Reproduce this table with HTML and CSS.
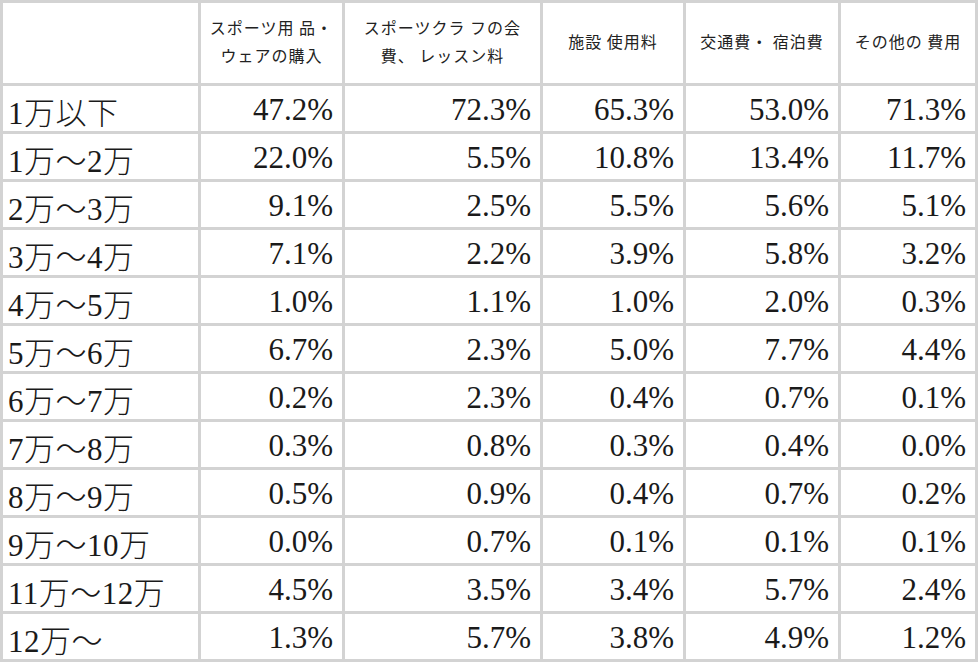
FILE: index.html
```html
<!DOCTYPE html>
<html lang="ja">
<head>
<meta charset="utf-8">
<title>スポーツ費用</title>
<link rel="stylesheet" href="styles.css">
</head>
<body>
<div class="grid">
  <div class="hd"></div>
  <div class="hd">スポーツ用 品・<br>ウェアの購入</div>
  <div class="hd">スポーツクラ フの会<br>費、 レッスン料</div>
  <div class="hd">施設 使用料</div>
  <div class="hd">交通費・ 宿泊費</div>
  <div class="hd">その他の 費用</div>

  <div class="lb">1万以下</div><div class="num">47.2%</div><div class="num">72.3%</div><div class="num">65.3%</div><div class="num">53.0%</div><div class="num">71.3%</div>
  <div class="lb">1万〜2万</div><div class="num">22.0%</div><div class="num">5.5%</div><div class="num">10.8%</div><div class="num">13.4%</div><div class="num">11.7%</div>
  <div class="lb">2万〜3万</div><div class="num">9.1%</div><div class="num">2.5%</div><div class="num">5.5%</div><div class="num">5.6%</div><div class="num">5.1%</div>
  <div class="lb">3万〜4万</div><div class="num">7.1%</div><div class="num">2.2%</div><div class="num">3.9%</div><div class="num">5.8%</div><div class="num">3.2%</div>
  <div class="lb">4万〜5万</div><div class="num">1.0%</div><div class="num">1.1%</div><div class="num">1.0%</div><div class="num">2.0%</div><div class="num">0.3%</div>
  <div class="lb">5万〜6万</div><div class="num">6.7%</div><div class="num">2.3%</div><div class="num">5.0%</div><div class="num">7.7%</div><div class="num">4.4%</div>
  <div class="lb">6万〜7万</div><div class="num">0.2%</div><div class="num">2.3%</div><div class="num">0.4%</div><div class="num">0.7%</div><div class="num">0.1%</div>
  <div class="lb">7万〜8万</div><div class="num">0.3%</div><div class="num">0.8%</div><div class="num">0.3%</div><div class="num">0.4%</div><div class="num">0.0%</div>
  <div class="lb">8万〜9万</div><div class="num">0.5%</div><div class="num">0.9%</div><div class="num">0.4%</div><div class="num">0.7%</div><div class="num">0.2%</div>
  <div class="lb">9万〜10万</div><div class="num">0.0%</div><div class="num">0.7%</div><div class="num">0.1%</div><div class="num">0.1%</div><div class="num">0.1%</div>
  <div class="lb">11万〜12万</div><div class="num">4.5%</div><div class="num">3.5%</div><div class="num">3.4%</div><div class="num">5.7%</div><div class="num">2.4%</div>
  <div class="lb">12万〜</div><div class="num">1.3%</div><div class="num">5.7%</div><div class="num">3.8%</div><div class="num">4.9%</div><div class="num">1.2%</div>
</div>
</body>
</html>
```

FILE: styles.css
```css
html, body {
  margin: 0;
  padding: 0;
  background: #ffffff;
}

.grid {
  display: grid;
  grid-template-columns: 195px 141px 195px 140px 152px 134px;
  grid-template-rows: 80px repeat(12, 45px);
  gap: 3px;
  padding: 3px;
  background: #d3d3d3;
  width: max-content;
  color: #1a1a1a;
}

.grid > div {
  background: #ffffff;
  display: flex;
  align-items: center;
}

.hd {
  justify-content: center;
  text-align: center;
  font-family: "Noto Sans CJK JP", "Noto Sans", sans-serif;
  font-size: 16px;
  line-height: 28px;
  letter-spacing: 1px;
  font-weight: 400;
  color: #222;
  padding-bottom: 4px;
}

.lb {
  padding-left: 5px;
  padding-top: 3px;
  font-family: "Liberation Serif", "Noto Sans CJK JP", serif;
  font-size: 31px;
  font-weight: 300;
  letter-spacing: 0.5px;
}

.num {
  justify-content: flex-end;
  padding-right: 9px;
  padding-top: 3px;
  font-family: "Liberation Serif", serif;
  font-size: 31px;
  font-weight: 400;
}
```
